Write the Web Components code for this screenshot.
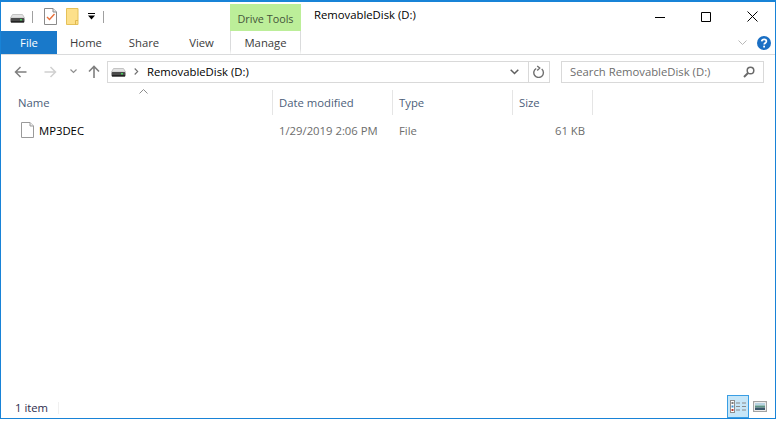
<!DOCTYPE html>
<html>
<head>
<meta charset="utf-8">
<style>
  html, body { margin: 0; background: #fff; }
  body { font: 11.3px "Open Sans", "Noto Sans", sans-serif; color: #1e1e1e; }
</style>
</head>
<body>
<explorer-window>
  <title-bar title="RemovableDisk (D:)"></title-bar>
  <ribbon-tabs></ribbon-tabs>
  <nav-bar path="RemovableDisk (D:)"></nav-bar>
  <file-list></file-list>
  <status-bar count="1 item"></status-bar>
</explorer-window>

<script>
const DRIVE = () => `<svg width="15" height="9" viewBox="0 0 15 9">
  <path d="M2.5 .5h10L14.5 4H.5z" fill="#e2e2e2" stroke="#c4c4c4"/>
  <rect x=".5" y="4" width="14" height="4.500" rx="1" fill="#4a4a4a"/>
  <rect x="1" y="7" width="13" height="1.500" fill="#222"/>
  <rect x="10" y="5" width="2" height="1.500" fill="#47d05a"/></svg>`;

class ExplorerWindow extends HTMLElement {
    constructor() {
        super();
        this.attachShadow({ mode: 'open' });
        this.shadowRoot.innerHTML = `
        <style>
            :host {
                display: flex;
                flex-direction: column;
                box-sizing: border-box;
                width: 776px;
                height: 419px;
                border: 1px solid #1883d7;
                border-top-width: 2px;
                background: #fff;
            }
        </style>
        <slot></slot>`;
    }
}

class TitleBar extends HTMLElement {
    constructor() {
        super();
        this.attachShadow({ mode: 'open' });
    }
    connectedCallback() {
        this.shadowRoot.innerHTML = `
        <style>
            :host { display: flex; align-items: stretch; height: 29px; flex: none; }
            .qat { display: flex; align-items: center; width: 229px; flex: none; padding: 0 0 0 9px; box-sizing: border-box; height: 29px; }
            .sep { width: 1px; height: 12px; background: #a0a0a0; flex: none; }
            .qat svg { flex: none; display: block; }
            .tool {
                flex: none; width: 71px; margin-top: 2px; box-sizing: border-box; padding-top: 2px;
                background: #bcee99; color: #44533a; font-size: 10.8px;
                display: flex; align-items: center; justify-content: center;
            }
            .title { flex: 1; padding: 3px 0 0 13px; color: #000; display: flex; align-items: flex-start; line-height: 20px; }
            .btns { display: flex; flex: none; }
            .btn { width: 46px; height: 29px; display: flex; align-items: center; justify-content: center; }
            .btn svg { display: block; }
        </style>
        <div class="qat">
            <span style="margin-top:4px">${DRIVE()}</span>
            <span class="sep" style="margin-left:7px"></span>
            <svg style="margin-left:11px" width="13" height="17" viewBox="0 0 13 17">
              <path d="M.5 .5h8.5l3.500 3.500v12.500H.5z" fill="#fff" stroke="#8a8a8a"/>
              <path d="M9 .5v3.500h3.500" fill="#e8e8e8" stroke="#8a8a8a"/>
              <path d="M3 9l2.500 2.500L10.500 6" fill="none" stroke="#e8703a" stroke-width="1.400"/>
            </svg>
            <svg style="margin-left:9px" width="13" height="17" viewBox="0 0 13 17">
              <path d="M.5 .5h11.500v16H.5z" fill="#fde08a" stroke="#e5c158"/>
              <path d="M9.500 16.500v-4h2.500" fill="none" stroke="#e0b84e"/>
            </svg>
            <svg style="margin-left:9px" width="7" height="7" viewBox="0 0 7 7">
              <rect width="7" height="1" y="0" fill="#000"/><path d="M0 2.500h7L3.500 6.500z" fill="#000"/>
            </svg>
            <span class="sep" style="margin-left:8px"></span>
        </div>
        <div class="tool">Drive Tools</div>
        <div class="title">${this.getAttribute('title')}</div>
        <div class="btns">
            <div class="btn"><svg width="10" height="10" viewBox="0 0 10 10"><path d="M0 5.500h10" stroke="#000"/></svg></div>
            <div class="btn"><svg width="10" height="10" viewBox="0 0 10 10"><path d="M.5 .5h9v9h-9z" fill="none" stroke="#000"/></svg></div>
            <div class="btn"><svg width="11" height="11" viewBox="0 0 11 11"><path d="M.5 .5l10 10M10.500 .5l-10 10" stroke="#000" fill="none"/></svg></div>
        </div>`;
    }
}

class RibbonTabs extends HTMLElement {
    constructor() {
        super();
        this.attachShadow({ mode: 'open' });
        this.shadowRoot.innerHTML = `
        <style>
            :host { display: flex; height: 24px; flex: none; box-sizing: border-box; border-bottom: 1px solid #dadbdc; color: #3b3b3b; }
            .tabs { display: flex; height: 23px; flex: 1; align-items: stretch; }
            .tab { display: flex; align-items: center; justify-content: center; }
            .file { width: 56px; background: #1979ca; color: #fff; }
            .home { width: 58px; }
            .share { width: 58px; }
            .view { width: 57px; }
            .manage {
                width: 71px; box-sizing: border-box;
                border-left: 1px solid #dadbdc; border-right: 1px solid #dadbdc;
                border-image: linear-gradient(#dadbdc 75%, #fff) 1;
            }
            .right { display: flex; align-items: center; gap: 10px; padding-right: 4px; }
            .right svg { display: block; }
        </style>
        <div class="tabs">
            <div class="tab file">File</div>
            <div class="tab home">Home</div>
            <div class="tab share">Share</div>
            <div class="tab view">View</div>
            <div class="tab manage">Manage</div>
        </div>
        <div class="right">
            <svg width="9" height="5" viewBox="0 0 9 5"><path d="M.5 .5l4 4 4-4" fill="none" stroke="#b8b8b8"/></svg>
            <svg width="14" height="14" viewBox="0 0 14 14">
              <circle cx="7" cy="7" r="7" fill="#1a6fc4"/>
              <path d="M4.700 5.300c.2-1.300 1.100-2 2.400-2 1.400 0 2.300.8 2.300 1.900 0 1.800-2.200 1.700-2.200 3.400" fill="none" stroke="#fff" stroke-width="1.700"/>
              <rect x="6.200" y="9.700" width="1.800" height="1.800" fill="#fff"/>
            </svg>
        </div>`;
    }
}

class NavBar extends HTMLElement {
    constructor() {
        super();
        this.attachShadow({ mode: 'open' });
    }
    connectedCallback() {
        const path = this.getAttribute('path');
        this.shadowRoot.innerHTML = `
        <style>
            :host { display: flex; align-items: center; height: 33px; flex: none; box-sizing: border-box; padding: 0 12px 0 13px; }
            svg { display: block; flex: none; }
            .arrows { display: flex; align-items: center; width: 93px; flex: none; }
            .box {
                display: flex; align-items: center; height: 22px; box-sizing: border-box;
                border: 1px solid #d9d9d9; color: #000;
            }
            .addr { width: 443px; flex: none; }
            .addr .drive { margin: 2px 0 0 3px; }
            .addr .path { flex: 1; padding-left: 8px; white-space: nowrap; }
            .chev { width: 28px; height: 20px; display: flex; align-items: center; justify-content: center; }
            .refresh { width: 20px; height: 20px; border-left: 1px solid #d9d9d9; display: flex; align-items: center; justify-content: center; }
            .search { width: 203px; flex: none; margin-left: 11px; color: #6d6d6d; padding: 0 8px; justify-content: space-between; }
        </style>
        <div class="arrows">
            <svg width="13" height="12" viewBox="0 0 13 12"><path d="M12.500 6H2M6.500 1L1.500 6l5 5" fill="none" stroke="#7f7f7f" stroke-width="1.500"/></svg>
            <svg style="margin-left:17px" width="13" height="12" viewBox="0 0 13 12"><path d="M.5 6H11M6.500 1l5 5-5 5" fill="none" stroke="#d0d0d0" stroke-width="1.500"/></svg>
            <svg style="margin-left:13px" width="7" height="5" viewBox="0 0 7 5"><path d="M.5 .5l3 3 3-3" fill="none" stroke="#8f8f8f" stroke-width="1.200"/></svg>
            <svg style="margin-left:11px" width="12" height="13" viewBox="0 0 12 13"><path d="M6 13V2M1 6.500l5-5 5 5" fill="none" stroke="#7f7f7f" stroke-width="1.600"/></svg>
        </div>
        <div class="box addr">
            <span class="drive">${DRIVE()}</span>
            <svg style="margin-left:8px" width="5" height="7" viewBox="0 0 5 7"><path d="M.7 .5l3 3-3 3" fill="none" stroke="#707070" stroke-width="1.100"/></svg>
            <span class="path">${path}</span>
            <span class="chev"><svg width="9" height="6" viewBox="0 0 9 6"><path d="M.7 .7l3.800 3.800L8.300 .7" fill="none" stroke="#5f5f5f" stroke-width="1.500"/></svg></span>
            <span class="refresh"><svg width="12" height="13" viewBox="0 0 12 13"><path d="M3.500 3A4.800 4.800 0 1 0 9 3.500M4.500 .5L7 2.500 4.500 5" transform="translate(-.3 .5)" fill="none" stroke="#6f6f6f" stroke-width="1.400"/></svg></span>
        </div>
        <div class="box search">
            <span>Search ${path}</span>
            <svg width="12" height="12" viewBox="0 0 12 12"><circle cx="7.500" cy="4.500" r="3.300" fill="none" stroke="#6a6a6a" stroke-width="1.500"/><path d="M5 7l-4 4" stroke="#6a6a6a" stroke-width="2"/></svg>
        </div>`;
    }
}

class FileList extends HTMLElement {
    constructor() {
        super();
        this.attachShadow({ mode: 'open' });
        this.shadowRoot.innerHTML = `
        <style>
            :host { display: block; flex: 1; position: relative; }
            .row { display: grid; grid-template-columns: 272px 120px 120px 80px; }
            .head { height: 25px; margin-top: 2px; color: #4c607a; }
            .head div { display: flex; align-items: center; padding-left: 6px; border-right: 1px solid #e5e5e5; box-sizing: border-box; }
            .head div:first-child { padding-left: 17px; }
            .item { height: 22px; margin-top: 4px; color: #6d6d6d; align-items: center; }
            .item div { padding-left: 6px; }
            .name { display: flex; align-items: center; padding-left: 20px !important; color: #000; }
            .name svg { display: block; margin-right: 5px; }
            .size { text-align: right; padding-right: 8px; }
            .caret { position: absolute; left: 138px; top: 1px; display: block; }
        </style>
        <svg class="caret" width="9" height="5" viewBox="0 0 9 5"><path d="M.5 4.500l4-4 4 4" fill="none" stroke="#8c8c8c"/></svg>
        <div class="row head"><div>Name</div><div>Date modified</div><div>Type</div><div>Size</div></div>
        <div class="row item">
            <div class="name">
                <svg width="13" height="16" viewBox="0 0 13 16"><path d="M.5 .5h8.500l3.500 3.500v11.500H.5z" fill="#fff" stroke="#9a9a9a"/><path d="M9 .5v3.500h3.500" fill="#eee" stroke="#9a9a9a"/></svg>
                MP3DEC
            </div>
            <div>1/29/2019 2:06 PM</div>
            <div>File</div>
            <div class="size">61 KB</div>
        </div>`;
    }
}

class StatusBar extends HTMLElement {
    constructor() {
        super();
        this.attachShadow({ mode: 'open' });
    }
    connectedCallback() {
        this.shadowRoot.innerHTML = `
        <style>
            :host { display: flex; align-items: center; height: 21px; flex: none; color: #2d2d4d; padding-left: 14px; }
            .count { padding-right: 10px; border-right: 1px solid #f0f0f0; line-height: 12px; }
            .views { margin-left: auto; display: flex; align-items: flex-end; height: 23px; margin-top: -2px; }
            .on { width: 22px; height: 23px; box-sizing: border-box; border: 1px solid #3a9ee4; background: #c6e6f8; display: flex; align-items: center; justify-content: center; }
            svg { display: block; }
            .thumb { margin: 0 8px 6px 4px; }
        </style>
        <span class="count">${this.getAttribute('count')}</span>
        <div class="views">
            <div class="on">
                <svg width="17" height="13" viewBox="0 0 17 13">
                  <rect x=".5" y=".5" width="4" height="12" fill="#fff" stroke="#8e8e8e"/>
                  <rect x="1.500" y="2" width="2" height="2" fill="#7a7a7a"/><rect x="1.500" y="5.500" width="2" height="2" fill="#3a8fd0"/><rect x="1.500" y="9" width="2" height="2" fill="#c0392b"/>
                  <path d="M6 3h4M12 3h4M6 6.500h4M12 6.500h4M6 10h4M12 10h4" stroke="#8a8a8a"/>
                </svg>
            </div>
            <svg class="thumb" width="14" height="11" viewBox="0 0 14 11">
              <rect x=".6" y=".6" width="12.800" height="9.800" fill="#fff" stroke="#a3a3a3" stroke-width="1.200"/>
              <rect x="2" y="2" width="10" height="2.500" fill="#b7d3e2"/><rect x="2" y="4.500" width="10" height="2" fill="#5a9483"/><rect x="2" y="6.500" width="10" height="2.500" fill="#39566a"/>
            </svg>
        </div>`;
    }
}

customElements.define('explorer-window', ExplorerWindow);
customElements.define('title-bar', TitleBar);
customElements.define('ribbon-tabs', RibbonTabs);
customElements.define('nav-bar', NavBar);
customElements.define('file-list', FileList);
customElements.define('status-bar', StatusBar);
</script>
</body>
</html>
